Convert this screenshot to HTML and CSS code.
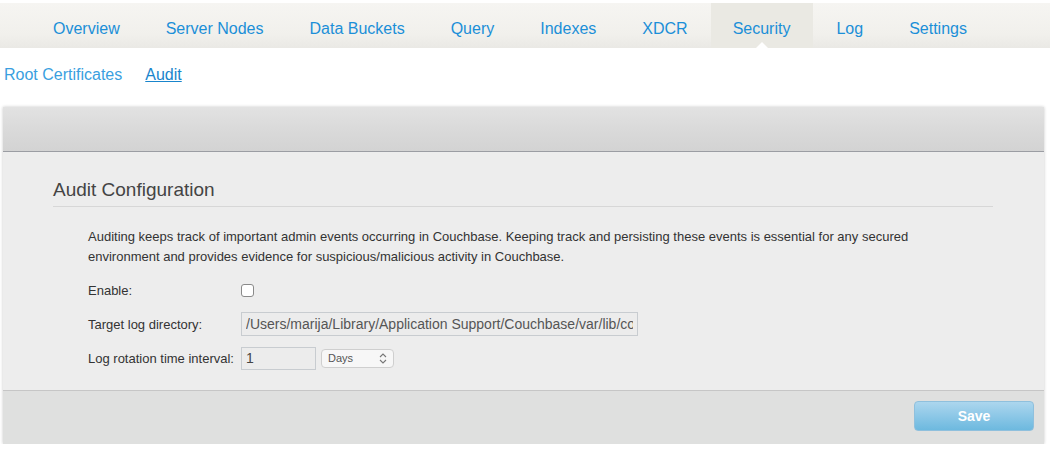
FILE: index.html
```html
<!DOCTYPE html>
<html>
<head>
<meta charset="utf-8">
<link rel="stylesheet" href="styles.css">
</head>
<body>
<nav class="topnav">
  <a href="#">Overview</a>
  <a href="#">Server Nodes</a>
  <a href="#">Data Buckets</a>
  <a href="#">Query</a>
  <a href="#">Indexes</a>
  <a href="#">XDCR</a>
  <a href="#" class="active">Security</a>
  <a href="#">Log</a>
  <a href="#">Settings</a>
</nav>
<div class="subnav">
  <a href="#" class="sub">Root Certificates</a>
  <a href="#" class="sub current">Audit</a>
</div>
<section class="panel">
  <div class="panel-head"></div>
  <div class="panel-body">
    <h2 class="section-title">Audit Configuration</h2>
    <div class="form">
      <p class="intro">Auditing keeps track of important admin events occurring in Couchbase. Keeping track and persisting these events is essential for any secured environment and provides evidence for suspicious/malicious activity in Couchbase.</p>
      <div class="row">
        <label class="lbl">Enable:</label>
        <input type="checkbox" class="check">
      </div>
      <div class="row">
        <label class="lbl">Target log directory:</label>
        <input type="text" class="txt path" value="/Users/marija/Library/Application Support/Couchbase/var/lib/couchbase/logs">
      </div>
      <div class="row">
        <label class="lbl">Log rotation time interval:</label>
        <input type="text" class="txt num" value="1">
        <div class="select">
          <span>Days</span>
          <svg width="8" height="11" viewBox="0 0 8 11"><path d="M1 4 L4 1 L7 4 M1 7 L4 10 L7 7" fill="none" stroke="#777" stroke-width="1.1"/></svg>
        </div>
      </div>
    </div>
  </div>
  <div class="panel-foot">
    <button class="save">Save</button>
  </div>
</section>
</body>
</html>
```

FILE: styles.css
```css
* { box-sizing: border-box; }
html, body { margin: 0; padding: 0; background: #fff; }
body { font-family: "Liberation Sans", Arial, sans-serif; color: #333; }

.topnav {
  margin-top: 3px;
  height: 45px;
  display: flex;
  padding-left: 30px;
  background: linear-gradient(#f6f5f2, #f1f0ec 70%, #eae9e5);
}
.topnav a {
  position: relative;
  display: block;
  padding: 2px 23px 0;
  line-height: 47px;
  font-size: 16px;
  color: #1b8fd8;
  text-decoration: none;
}
.topnav a.active {
  padding: 2px 23px 0 22px;
  background: #eae9e3;
}
.topnav a.active::after {
  content: "";
  position: absolute;
  left: 50%;
  bottom: 0;
  margin-left: -6px;
  border-left: 6px solid transparent;
  border-right: 6px solid transparent;
  border-bottom: 6px solid #fff;
}

.subnav {
  display: flex;
  gap: 23px;
  padding: 17px 0 0 4px;
  height: 59px;
}
.sub {
  font-size: 16px;
  line-height: 20px;
  color: #3a9fe0;
  text-decoration: none;
}
.sub.current {
  color: #1985cc;
  text-decoration: underline;
}

.panel {
  margin: 0 6px 0 3px;
  box-shadow: 0 0 3px rgba(0,0,0,0.22);
  background: #ededed;
}
.panel-head {
  height: 45px;
  background: linear-gradient(#e2e2e2, #d9d9d9 55%, #d3d3d3);
  border-bottom: 1px solid #9b9da3;
  box-shadow: 0 1px 0 #fafafa;
}
.panel-body {
  padding: 26px 51px 15px 50px;
  background: #ededed;
}
.section-title {
  margin: 0;
  font-size: 19px;
  font-weight: normal;
  line-height: 24px;
  color: #444;
  padding-bottom: 4px;
  border-bottom: 1px solid #d7d7d7;
}
.form { padding-left: 35px; }
.intro {
  margin: 20px 0 6px;
  max-width: 850px;
  font-size: 13px;
  line-height: 20px;
  color: #333;
}
.row {
  display: flex;
  align-items: center;
  height: 34px;
}
.lbl {
  width: 153px;
  font-size: 13px;
  color: #333;
}
.check {
  appearance: none;
  -webkit-appearance: none;
  margin: 0;
  width: 13px;
  height: 13px;
  border: 1px solid #8a8a8a;
  border-radius: 3px;
  background: #fff;
}
.txt {
  height: 24px;
  margin: 0;
  border: 1px solid #c8ccd0;
  background: #ececec;
  padding: 0 4px;
  font-family: "Liberation Sans", Arial, sans-serif;
  font-size: 14px;
  color: #555;
  outline: none;
}
.path { width: 397px; }
.num { width: 75px; height: 23px; color: #444; }
.select {
  margin-left: 5px;
  width: 73px;
  height: 19px;
  border: 1px solid #cfcfcf;
  border-radius: 4px;
  background: #f7f7f7;
  display: flex;
  align-items: center;
  justify-content: space-between;
  padding: 0 6px 0 6px;
  font-size: 11px;
  color: #555;
}

.panel-foot {
  border-top: 1px solid #c6c6c6;
  background: #dfe0df;
  display: flex;
  justify-content: flex-end;
  padding: 10px 10px 13px;
}
.save {
  width: 120px;
  height: 30px;
  border: 1px solid #8fc0dd;
  border-radius: 4px;
  background: linear-gradient(#acd6ee, #6db9df);
  color: #fff;
  font-family: "Liberation Sans", Arial, sans-serif;
  font-weight: bold;
  font-size: 14px;
  padding: 0;
}
```
